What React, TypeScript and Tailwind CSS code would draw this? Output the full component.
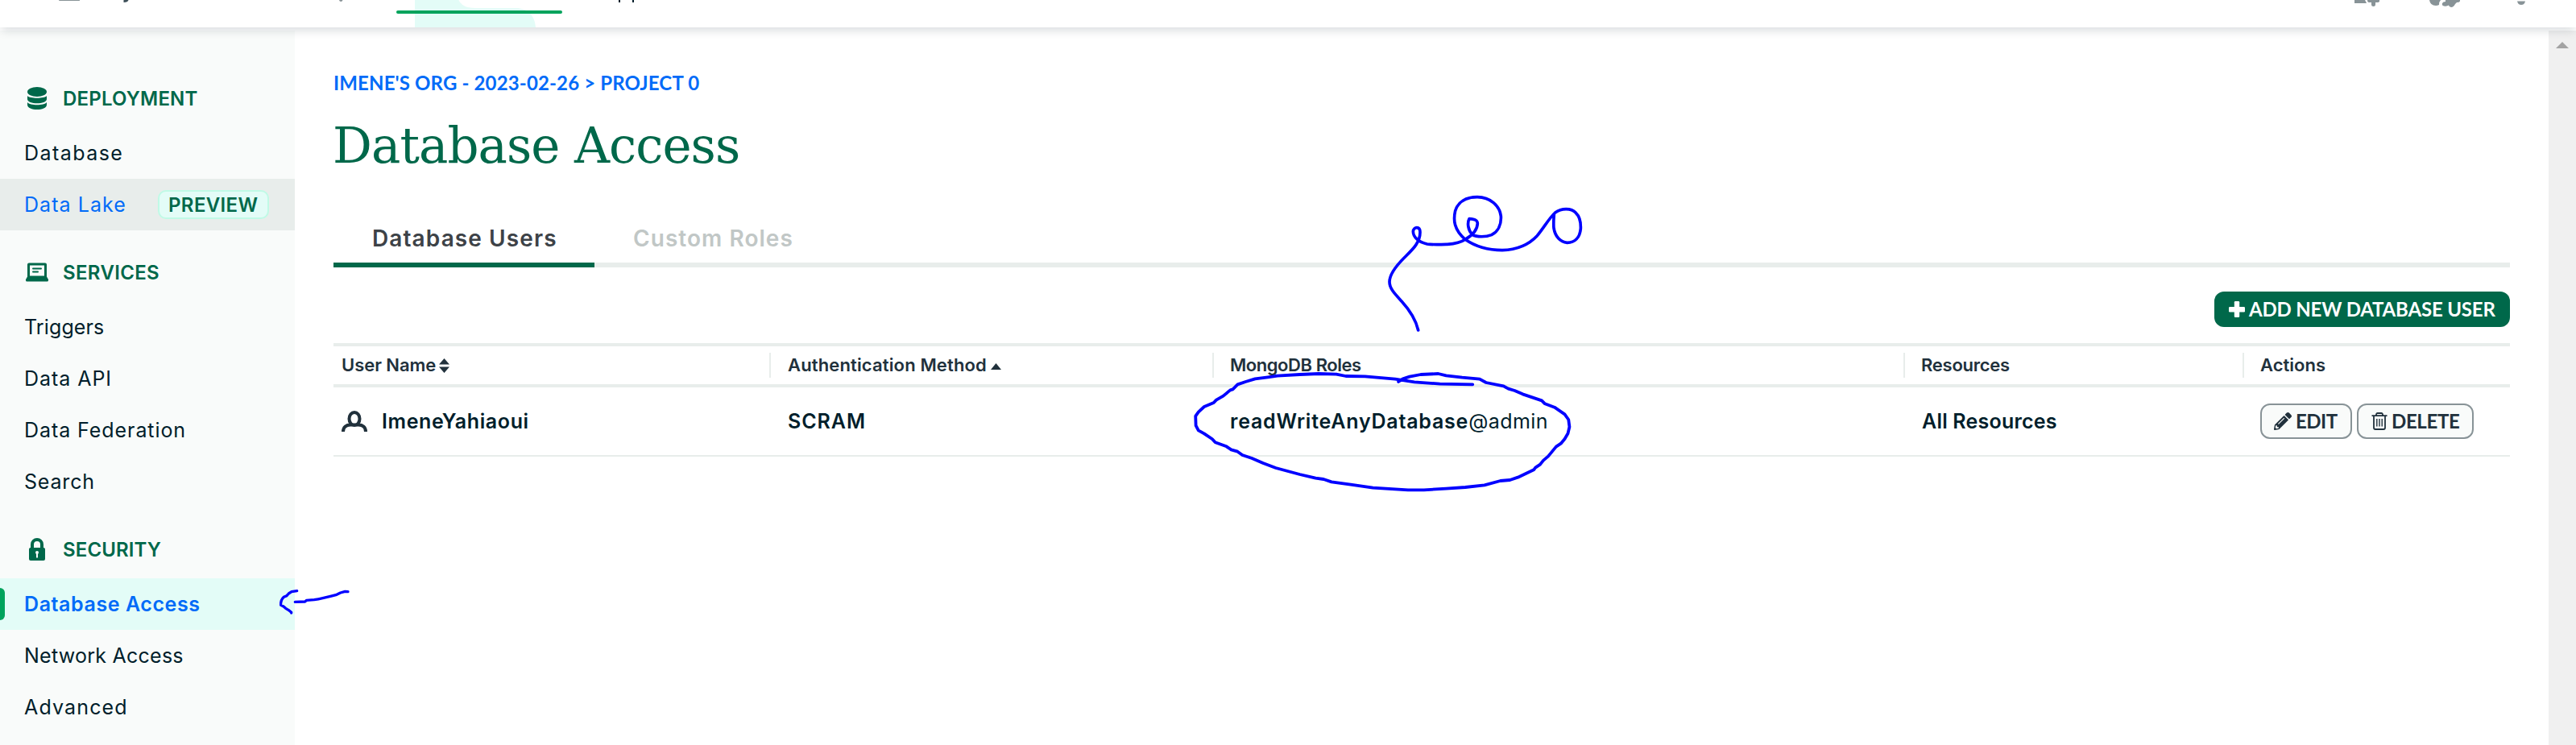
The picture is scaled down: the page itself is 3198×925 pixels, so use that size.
import React from "react";
import { FaPencilAlt } from "react-icons/fa";

type NavItemProps = { label: string; tracking: string };

function NavItem({ label, tracking }: NavItemProps) {
  return (
    <a className="flex h-16 items-center pt-[2px] pl-[30px] text-[25px] text-[#001e2b]">
      <span className={`whitespace-nowrap ${tracking}`}>{label}</span>
    </a>
  );
}

function NavHeading({ label, tracking, icon }: { label: string; tracking: string; icon: React.ReactNode }) {
  return (
    <div className="flex h-[88px] items-center gap-4 pt-4 pl-[30px] text-[24px] font-semibold text-[#00684a]">
      <span className="flex w-8 justify-center">{icon}</span>
      <span className={`pt-[2px] ${tracking}`}>{label}</span>
    </div>
  );
}

const DatabaseIcon = () => (
  <svg width="24" height="28" viewBox="0 0 24 28" fill="currentColor">
    <ellipse cx="12" cy="6" rx="12" ry="6" />
    <path d="M0 11C3 14.6 21 14.6 24 11V15C24 22 0 22 0 15Z" />
    <path d="M0 19C3 23.4 21 23.4 24 19V22C24 30 0 30 0 22Z" />
  </svg>
);

const LaptopIcon = () => (
  <svg width="28" height="24" viewBox="0 0 28 24" fill="currentColor">
    <path
      fillRule="evenodd"
      d="M4 0.5H24A2 2 0 0 1 26 2.500V17.500L28 21V22A1.500 1.500 0 0 1 26.500 23.500H1.500A1.500 1.500 0 0 1 0 22V21L2 17.500V2.500A2 2 0 0 1 4 0.500ZM5 3.500V16.500H23V3.500Z"
    />
    <rect x="8" y="6.500" width="12" height="2" rx="1" />
    <rect x="8" y="10.500" width="8" height="2" rx="1" />
  </svg>
);

const LockIcon = () => (
  <svg width="20" height="28" viewBox="0 0 20 28">
    <path d="M4 13V8A6 6 0 0 1 16 8V13" fill="none" stroke="currentColor" strokeWidth="4" />
    <rect y="12" width="20" height="16" rx="2" fill="currentColor" />
    <circle cx="10" cy="18" r="2" fill="#f9fbfa" />
    <rect x="9" y="18" width="2" height="6.500" fill="#f9fbfa" />
  </svg>
);

const PersonIcon = () => (
  <svg width="32" height="26" viewBox="0 0 32 26" fill="none" stroke="#21313c" strokeWidth="4">
    <ellipse cx="16" cy="10" rx="6.500" ry="8" />
    <path d="M2 26C2 20 6 17.500 11 17.500H21C26 17.500 30 20 30 26" />
  </svg>
);

const TrashIcon = () => (
  <svg width="20" height="22" viewBox="0 0 20 22" fill="none" stroke="#21313c" strokeWidth="1.800">
    <path d="M0.500 4.200H19.500M6 4V2.800A1.600 1.600 0 0 1 7.600 1H12.400A1.600 1.600 0 0 1 14 2.800V4M3 4.500V19A2 2 0 0 0 5 21H15A2 2 0 0 0 17 19V4.500" />
    <path d="M6.800 8V17.500M10 8V17.500M13.200 8V17.500" strokeWidth="1.400" />
  </svg>
);

const PlusIcon = () => (
  <svg width="20" height="20" viewBox="0 0 20 20" fill="#fff">
    <rect x="0" y="7" width="20" height="6.500" rx="1.200" />
    <rect x="6.800" y="0" width="6.400" height="20" rx="1.200" />
  </svg>
);

function HeaderBar() {
  return (
    <header className="relative z-10 h-[34px] shrink-0 bg-white shadow-[0_6px_12px_-2px_rgba(0,30,43,0.15)]">
      <svg width="3198" height="34" viewBox="0 0 3198 34" className="block">
        <path d="M515 0H569.500C572 6 578 10 590 10H640C656 10 664 20 665 34H515Z" fill="#e3fcf7" />
        <rect x="492" y="13" width="206" height="4" rx="2" fill="#00a35c" />
        <path d="M73 0H99V0.500Q99 1 98 1H74Q73 1 73 0Z" fill="#889397" />
        <path d="M153.500 0H159.500C159 2 157 3 153.500 3Z" fill="#3d4f58" />
        <path d="M421 0H425.500Q425 2 423.200 2Q421.500 2 421 0Z" fill="#889397" />
        <path d="M768 0H770V3H768ZM785 0H787V3H785Z" fill="#001e2b" />
        <g fill="#889397">
          <path d="M2923 0H2936L2938 4H2923ZM2939 0H2954V2Q2953 3 2952 3H2949V6Q2949 8 2946.500 8T2944 6V3H2941Q2939 3 2939 0Z" />
          <path d="M3016 0H3030Q3028 2 3028 6Q3026 7 3024 7Q3017 7 3016 0Z" />
          <path d="M3036 0H3054V1.500Q3053 3 3050 3L3048 5Q3046 9 3043 9Q3040 8 3040 6.500Q3038 8 3034 7.500Q3031 7 3032 4Q3033 2 3036 2Z" />
          <path d="M3125 1.500H3135Q3134 6 3130 6T3125 1.500Z" />
        </g>
      </svg>
    </header>
  );
}

function Sidebar() {
  return (
    <nav className="w-[366px] shrink-0 bg-[#f9fbfa] pt-8">
      <NavHeading label="DEPLOYMENT" tracking="tracking-[0.2px]" icon={<DatabaseIcon />} />
      <NavItem label="Database" tracking="tracking-[1.44px]" />
      <a className="flex h-16 items-center bg-[#e8edeb] pl-[30px] text-[25px] text-[#016bf8]">
        <span className="w-[166px] pt-[2px] tracking-[1.06px]">Data Lake</span>
        <span className="flex h-9 w-[138px] items-center rounded-[10px] border-2 border-[#c0fae6] bg-[#e3fcf7] pt-[2px] pl-[11px] text-[24px] font-semibold tracking-[0.37px] text-[#00684a]">
          PREVIEW
        </span>
      </a>
      <NavHeading label="SERVICES" tracking="tracking-[0.35px]" icon={<LaptopIcon />} />
      <NavItem label="Triggers" tracking="tracking-[0.12px]" />
      <NavItem label="Data API" tracking="tracking-[0.95px]" />
      <NavItem label="Data Federation" tracking="tracking-[0.93px]" />
      <NavItem label="Search" tracking="tracking-[0.82px]" />
      <NavHeading label="SECURITY" tracking="tracking-[0.13px]" icon={<LockIcon />} />
      <a className="flex h-16 items-center bg-[#e3fcf7] text-[25px] font-semibold text-[#016bf8]">
        <span className="h-10 w-1.5 rounded-r-[6px] bg-[#00a35c]" />
        <span className="pt-[2px] pl-6 tracking-[0.58px]">Database Access</span>
      </a>
      <NavItem label="Network Access" tracking="tracking-[0.25px]" />
      <NavItem label="Advanced" tracking="tracking-[1.15px]" />
    </nav>
  );
}

const cellDivider = "flex h-[31px] items-center border-r-2 border-[#e8edeb]";

function UsersTable() {
  return (
    <section className="mt-5 text-[#001e2b]">
      <div className="grid h-[55px] grid-cols-[543px_550px_858px_421px_330px] items-center border-y-4 border-[#e8edeb] text-[22px] font-semibold text-[#21313c]">
        <div className={`${cellDivider} pl-[10px]`}>
          <span className="w-[118px] tracking-[-0.05px]">User Name</span>
          <svg width="13" height="18" viewBox="0 0 13 18" fill="#21313c" className="ml-[3px]">
            <path d="M6.500 0L13 7.500H0ZM6.500 18L0 10.500H13Z" />
          </svg>
        </div>
        <div className={`${cellDivider} pl-[21px]`}>
          <span className="w-[249px] tracking-[0.14px]">Authentication Method</span>
          <svg width="13" height="8" viewBox="0 0 13 8" fill="#21313c" className="mt-[3px] ml-[3px]">
            <path d="M6.500 0L13 8H0Z" />
          </svg>
        </div>
        <div className={`${cellDivider} pl-5 tracking-[-0.45px]`}>MongoDB Roles</div>
        <div className={`${cellDivider} pl-5 tracking-[-0.26px]`}>Resources</div>
        <div className="pl-5 tracking-[0.02px]">Actions</div>
      </div>
      <div className="grid h-[86px] grid-cols-[544px_550px_858px_421px_329px] items-center border-b-2 border-[#e8edeb] text-[25px] font-semibold">
        <div className="flex items-center gap-[18px] pl-[10px]">
          <PersonIcon />
          <span className="pt-[2px] tracking-[0.6px]">ImeneYahiaoui</span>
        </div>
        <div className="pt-[2px] pl-5 tracking-[0.95px]">SCRAM</div>
        <div className="pt-[2px] pl-[19px] whitespace-nowrap">
          <span className="tracking-[0.78px]">readWriteAnyDatabase</span>
          <span className="font-normal tracking-[0.45px]">@admin</span>
        </div>
        <div className="pt-[2px] pl-5 tracking-[0.2px]">All Resources</div>
        <div className="flex gap-1.5 pl-[19px] font-['Lato',sans-serif] text-[24px] font-bold text-[#21313c]">
          <button className="flex h-11 w-[114px] items-center rounded-[12px] border-2 border-[#889397] bg-[#f9fbfa] pl-[15px]">
            <FaPencilAlt size={22} />
            <span className="ml-[5px] tracking-[-0.5px]">EDIT</span>
          </button>
          <button className="flex h-11 w-[145px] items-center rounded-[12px] border-2 border-[#889397] bg-[#f9fbfa] pl-4">
            <TrashIcon />
            <span className="ml-[5px] tracking-[-0.34px]">DELETE</span>
          </button>
        </div>
      </div>
    </section>
  );
}

function Annotations() {
  return (
    <svg
      width="3198"
      height="925"
      viewBox="0 0 3198 925"
      className="pointer-events-none absolute inset-0 z-20"
      fill="none"
      stroke="#0000ff"
      strokeLinecap="round"
      strokeLinejoin="round"
    >
      <g transform="translate(1690 230) scale(0.33333)" strokeWidth="11">
        <path d="M212 540C203 500 180 465 150 432C125 405 105 385 105 360C105 330 130 300 160 270C190 240 219 215 219 175C219 152 195 154 193 172C193 195 215 212 245 219C265 222 290 221 320 220C350 218 375 210 390 200C415 185 432 165 433 142C432 130 425 127 402 125C394 140 397 168 414 184C430 194 465 193 485 185C510 172 522 145 520 115C515 75 480 45 432 44C390 44 360 62 350 95C342 130 345 165 387 202C420 225 470 242 525 242C580 240 625 220 655 188C680 158 700 122 722 102C745 85 782 84 799 103C815 118 818 138 817 162C814 195 795 214 767 214C740 212 722 190 717 160C715 140 717 125 718 108" />
      </g>
      <g transform="translate(1400 220) scale(0.39541 0.33333)">
        <polyline
          vectorEffect="non-scaling-stroke"
          strokeWidth="3.800"
          points="850,762 864,751 885,743 920,735 975,732 1000,739 1050,746 1105,752 1125,765 1180,778 1195,788 1215,795 1240,808 1300,832 1310,844 1340,857 1372,883 1384,903 1387,930 1382,955 1372,975 1360,992 1345,1004 1320,1040 1305,1055 1295,1070 1280,1082 1275,1090 1250,1104 1225,1118 1200,1128 1170,1131 1120,1147 1060,1155 1000,1160 930,1165 880,1165 770,1157 700,1145 640,1135 615,1125 590,1121 540,1107 465,1083 425,1065 390,1047 360,1035 345,1022 325,1015 310,1003 275,988 265,975 240,955 222,943 214,925 213,890 222,875 240,855 270,840 278,830 300,815 322,793 330,790 345,772 370,762 400,751 440,745 470,740 540,735 600,732 655,734 685,741 745,742 840,752 900,763 980,770 1083,772"
        />
      </g>
      <g transform="translate(0 600) scale(0.33333)" strokeWidth="10">
        <path d="M1106 401L1086 404L1075 411L1068 419L1057 424C1048 432 1045 440 1046 454L1056 459L1064 466L1074 472L1085 481V483M1099 442L1136 441L1142 436L1170 434C1190 431 1220 424 1254 415L1268 408L1285 403L1296 404" />
      </g>
    </svg>
  );
}

export default function App() {
  return (
    <div className="relative flex h-[925px] w-[3198px] flex-col overflow-hidden bg-white font-['Inter',sans-serif]">
      <HeaderBar />
      <div className="flex flex-1 pt-1">
        <Sidebar />
        <main className="flex-1 pt-[50px] pr-12 pl-12">
          <div className="h-[30px] font-['Lato',sans-serif] text-[24px] leading-[30px] font-bold tracking-[0.14px] text-[#016bf8]">
            {"IMENE'S ORG - 2023-02-26 > PROJECT 0"}
          </div>
          <h1 className="mt-[23px] -ml-px h-20 font-['DejaVu_Serif',serif] text-[61px] leading-[80px] tracking-[-0.94px] text-[#00684a]">
            Database Access
          </h1>
          <div className="mt-[43px] flex h-[68px] border-b-6 border-[#e8edeb] text-[28px] font-semibold">
            <div className="-mb-1.5 flex w-[324px] items-center border-b-6 border-[#00684a] pt-[2px] pl-12 tracking-[1.1px] text-[#3d4247]">
              Database Users
            </div>
            <div className="flex items-center pt-[2px] pl-12 tracking-[1.05px] text-[#c1c7c6]">Custom Roles</div>
          </div>
          <div className="mt-[30px] flex justify-end">
            <button className="flex h-11 w-[367px] items-center rounded-[12px] bg-[#00684a] pl-[18px] font-['Lato',sans-serif] text-[24px] font-bold text-white">
              <PlusIcon />
              <span className="ml-[5px] tracking-[-0.18px] whitespace-nowrap">ADD NEW DATABASE USER</span>
            </button>
          </div>
          <UsersTable />
        </main>
        <div className="flex w-[34px] shrink-0 justify-center bg-[#f0f0f0] pt-[14px]">
          <svg width="16" height="8" viewBox="0 0 16 8" fill="#a3a3a3">
            <path d="M8 0L16 8H0Z" />
          </svg>
        </div>
      </div>
      <Annotations />
    </div>
  );
}
